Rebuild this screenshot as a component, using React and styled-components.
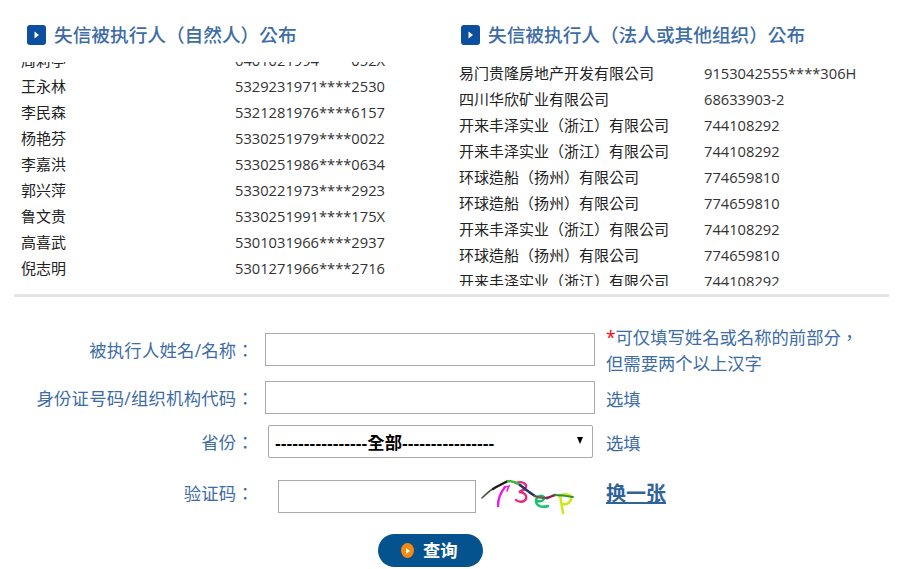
import React from 'react';
import styled, {createGlobalStyle} from 'styled-components';

const people = [
    ['周莉亭', '6401021994****052X'],
    ['王永林', '5329231971****2530'],
    ['李民森', '5321281976****6157'],
    ['杨艳芬', '5330251979****0022'],
    ['李嘉洪', '5330251986****0634'],
    ['郭兴萍', '5330221973****2923'],
    ['鲁文贵', '5330251991****175X'],
    ['高喜武', '5301031966****2937'],
    ['倪志明', '5301271966****2716'],
];

const companies = [
    ['易门贵隆房地产开发有限公司', '9153042555****306H'],
    ['四川华欣矿业有限公司', '68633903-2'],
    ['开来丰泽实业（浙江）有限公司', '744108292'],
    ['开来丰泽实业（浙江）有限公司', '744108292'],
    ['环球造船（扬州）有限公司', '774659810'],
    ['环球造船（扬州）有限公司', '774659810'],
    ['开来丰泽实业（浙江）有限公司', '744108292'],
    ['环球造船（扬州）有限公司', '774659810'],
    ['开来丰泽实业（浙江）有限公司', '744108292'],
];

const PlayIcon = () => (
    <svg width="19" height="20" viewBox="0 0 19 20">
        <rect width="19" height="20" rx="3" fill="#0b4f9e"/>
        <path d="M7.5 6.5 L12 10 L7.5 13.5 Z" fill="#fff"/>
    </svg>
);

const Captcha = () => (
    <svg width="96" height="36" viewBox="0 0 96 36" fill="none" strokeLinecap="round">
        <path d="M24 7 C20 12 17 19 17 26" stroke="#e81fe0" strokeWidth="2.4"/>
        <path d="M24 7 L28 6 L26 11" stroke="#e81fe0" strokeWidth="1.6"/>
        <path d="M35 3 C40 1 46 3 45 7 C44 10 40 11 38 12 C43 12 46 15 45 19 C43 23 37 22 35 20" stroke="#e8287c" strokeWidth="2.4"/>
        <path d="M56 21 C60 22 64 20 63 17 C60 14 55 17 55 21 C55 26 61 28 67 26" stroke="#12c36c" strokeWidth="2.4"/>
        <path d="M79 15 C80 21 81 27 82 33 M78 16 C83 13 91 14 90 19 C89 24 84 25 81 24" stroke="#cfe81c" strokeWidth="2.6"/>
        <path d="M1 18 C5 14 8 11 12 9" stroke="#4a5a40" strokeWidth="1.6"/>
        <path d="M12 9 C17 6 21 4 27 1" stroke="#1c1c1c" strokeWidth="2.4"/>
        <path d="M27 1 C32 1 36 3 39 5" stroke="#3fb53a" strokeWidth="2.4"/>
        <path d="M39 5 C44 9 49 13 54 16" stroke="#27306e" strokeWidth="2.4"/>
        <path d="M54 16 C58 18 62 18 66 18" stroke="#6d5a4a" strokeWidth="2.4"/>
        <path d="M66 18 C69 17 71 16 74 15" stroke="#8a1f4a" strokeWidth="2.4"/>
        <path d="M74 15 C80 15 86 16 92 17" stroke="#2f8f3a" strokeWidth="1.8"/>
    </svg>
);

const App = () => {
    return (
        <>
            <GlobalStyle/>
            <Page>
                <Lists>
                    <ListColumn>
                        <ListHeader inset={27}>
                            <PlayIcon/>
                            <ListTitle>失信被执行人（自然人）公布</ListTitle>
                        </ListHeader>
                        <ListViewport>
                            <ListScroll offset={-15} inset={21}>
                                {people.map(([name, code]) => (
                                    <ListRow key={name} nameWidth={214}>
                                        <span>{name}</span>
                                        <Code>{code}</Code>
                                    </ListRow>
                                ))}
                            </ListScroll>
                        </ListViewport>
                    </ListColumn>
                    <ListColumn>
                        <ListHeader inset={5}>
                            <PlayIcon/>
                            <ListTitle>失信被执行人（法人或其他组织）公布</ListTitle>
                        </ListHeader>
                        <ListViewport>
                            <ListScroll offset={-2} inset={3}>
                                {companies.map(([name, code], i) => (
                                    <ListRow key={i} nameWidth={245}>
                                        <span>{name}</span>
                                        <Code>{code}</Code>
                                    </ListRow>
                                ))}
                            </ListScroll>
                        </ListViewport>
                    </ListColumn>
                </Lists>
                <Divider/>
                <Form>
                    <FormRow height={32} gap={16}>
                        <Label>被执行人姓名/名称：</Label>
                        <TextInput width={330}/>
                        <Hint><Star>*</Star>可仅填写姓名或名称的前部分，<br/>但需要两个以上汉字</Hint>
                    </FormRow>
                    <FormRow height={33} gap={11}>
                        <Label>身份证号码/组织机构代码：</Label>
                        <TextInput width={330}/>
                        <Hint>选填</Hint>
                    </FormRow>
                    <FormRow height={33} gap={22}>
                        <Label>省份：</Label>
                        <SelectWrap>
                            <Select defaultValue="all">
                                <option value="all">----------------全部----------------</option>
                            </Select>
                        </SelectWrap>
                        <Hint>选填</Hint>
                    </FormRow>
                    <FormRow height={33} gap={22}>
                        <Label lift={8}>验证码：</Label>
                        <TextInput width={198} inset={13}/>
                        <CaptchaBox><Captcha/></CaptchaBox>
                        <ChangeLink href="#">换一张</ChangeLink>
                    </FormRow>
                    <SearchButton type="button">
                        <ButtonDot/>
                        <ButtonText>查询</ButtonText>
                    </SearchButton>
                </Form>
            </Page>
        </>
    )
}

export default App

const GlobalStyle = createGlobalStyle`
  html, body {
    margin: 0;
    padding: 0;
    background: #fff;
    overflow: hidden;
  }

  body {
    font-family: "Open Sans", "Noto Sans CJK TC", sans-serif;
  }
`

const Page = styled.div`
  width: 912px;
  height: 569px;
  overflow: hidden;
  padding-top: 25px;
  box-sizing: border-box;
`

const Lists = styled.div`
  display: grid;
  grid-template-columns: 456px 456px;
`

const ListColumn = styled.div`
  display: flex;
  flex-direction: column;
`

const ListHeader = styled.div`
  display: flex;
  align-items: center;
  gap: 8px;
  height: 20px;
  margin-bottom: 17px;
  padding-left: ${({inset}) => inset}px;
`

const ListTitle = styled.div`
  padding-bottom: 4px;
  font-size: 18.67px;
  font-weight: 500;
  color: #3d6ca6;
  white-space: nowrap;
`

const ListViewport = styled.div`
  height: 224px;
  overflow: hidden;
`

const ListScroll = styled.div`
  margin-top: ${({offset}) => offset}px;
  padding-left: ${({inset}) => inset}px;
`

const ListRow = styled.div`
  display: grid;
  grid-template-columns: ${({nameWidth}) => nameWidth}px 1fr;
  height: 26px;
  line-height: 26px;
  font-size: 15px;
  color: #222;
  white-space: nowrap;
`

const Code = styled.span`
  font-size: 14.7px;
  color: #333;
`

const Divider = styled.div`
  height: 3px;
  margin: 8px 23px 0 14px;
  background: #e5e5e5;
`

const Form = styled.div`
  display: flex;
  flex-direction: column;
  padding-top: 36px;
`

const FormRow = styled.div`
  display: flex;
  align-items: center;
  height: ${({height}) => height}px;
  margin-bottom: ${({gap}) => gap}px;
`

const Label = styled.label`
  width: 254px;
  margin-right: 11px;
  padding-bottom: ${({lift}) => lift || 0}px;
  text-align: right;
  font-size: 17.33px;
  letter-spacing: 0.25px;
  color: #3d6ca6;
  white-space: nowrap;
  flex-shrink: 0;
`

const TextInput = styled.input`
  width: ${({width}) => width}px;
  height: 33px;
  margin-left: ${({inset}) => inset || 0}px;
  box-sizing: border-box;
  border: 1px solid #a9a9a9;
  padding: 0 4px;
  background: #fff;
  outline: none;
  flex-shrink: 0;
`

const Hint = styled.div`
  margin-left: 11px;
  padding-top: 2px;
  font-size: 17.33px;
  line-height: 26px;
  color: #3d6ca6;
  white-space: nowrap;
`

const Star = styled.span`
  color: #f00;
`

const SelectWrap = styled.div`
  position: relative;
  margin-left: 3px;
  margin-right: 2px;

  &::after {
    content: "";
    position: absolute;
    right: 10px;
    top: 12px;
    border-left: 3.5px solid transparent;
    border-right: 3.5px solid transparent;
    border-top: 7px solid #000;
    pointer-events: none;
  }
`

const Select = styled.select`
  display: block;
  width: 325px;
  height: 33px;
  box-sizing: border-box;
  appearance: none;
  border: 1px solid #a9a9a9;
  border-radius: 2px;
  padding: 3px 0 0 6px;
  background: #fff;
  color: #000;
  font-family: "Liberation Sans", "Noto Sans CJK TC", sans-serif;
  font-size: 17.33px;
  font-weight: 700;
  outline: none;
`

const CaptchaBox = styled.div`
  width: 96px;
  height: 36px;
  margin-left: 5px;
  margin-top: 3px;
  flex-shrink: 0;
`

const ChangeLink = styled.a`
  margin-left: 29px;
  padding-bottom: 9px;
  font-size: 20px;
  font-weight: 700;
  color: #2f6399;
  text-decoration: underline;
`

const SearchButton = styled.button`
  display: flex;
  align-items: center;
  align-self: flex-start;
  gap: 9px;
  width: 105px;
  height: 33px;
  margin: -1px 0 0 378px;
  padding: 0 0 0 23px;
  box-sizing: border-box;
  border: none;
  border-radius: 17px;
  background: #04538f;
  color: #fff;
  font-family: "Open Sans", "Noto Sans CJK TC", sans-serif;
`

const ButtonText = styled.span`
  padding-bottom: 2px;
  font-size: 17.33px;
  font-weight: 700;
`

const ButtonDot = styled.span`
  position: relative;
  width: 13px;
  height: 15px;
  border-radius: 50%;
  background: #f28a12;
  flex-shrink: 0;

  &::after {
    content: "";
    position: absolute;
    left: 5px;
    top: 4.5px;
    border-top: 3px solid transparent;
    border-bottom: 3px solid transparent;
    border-left: 4px solid #fff;
  }
`
